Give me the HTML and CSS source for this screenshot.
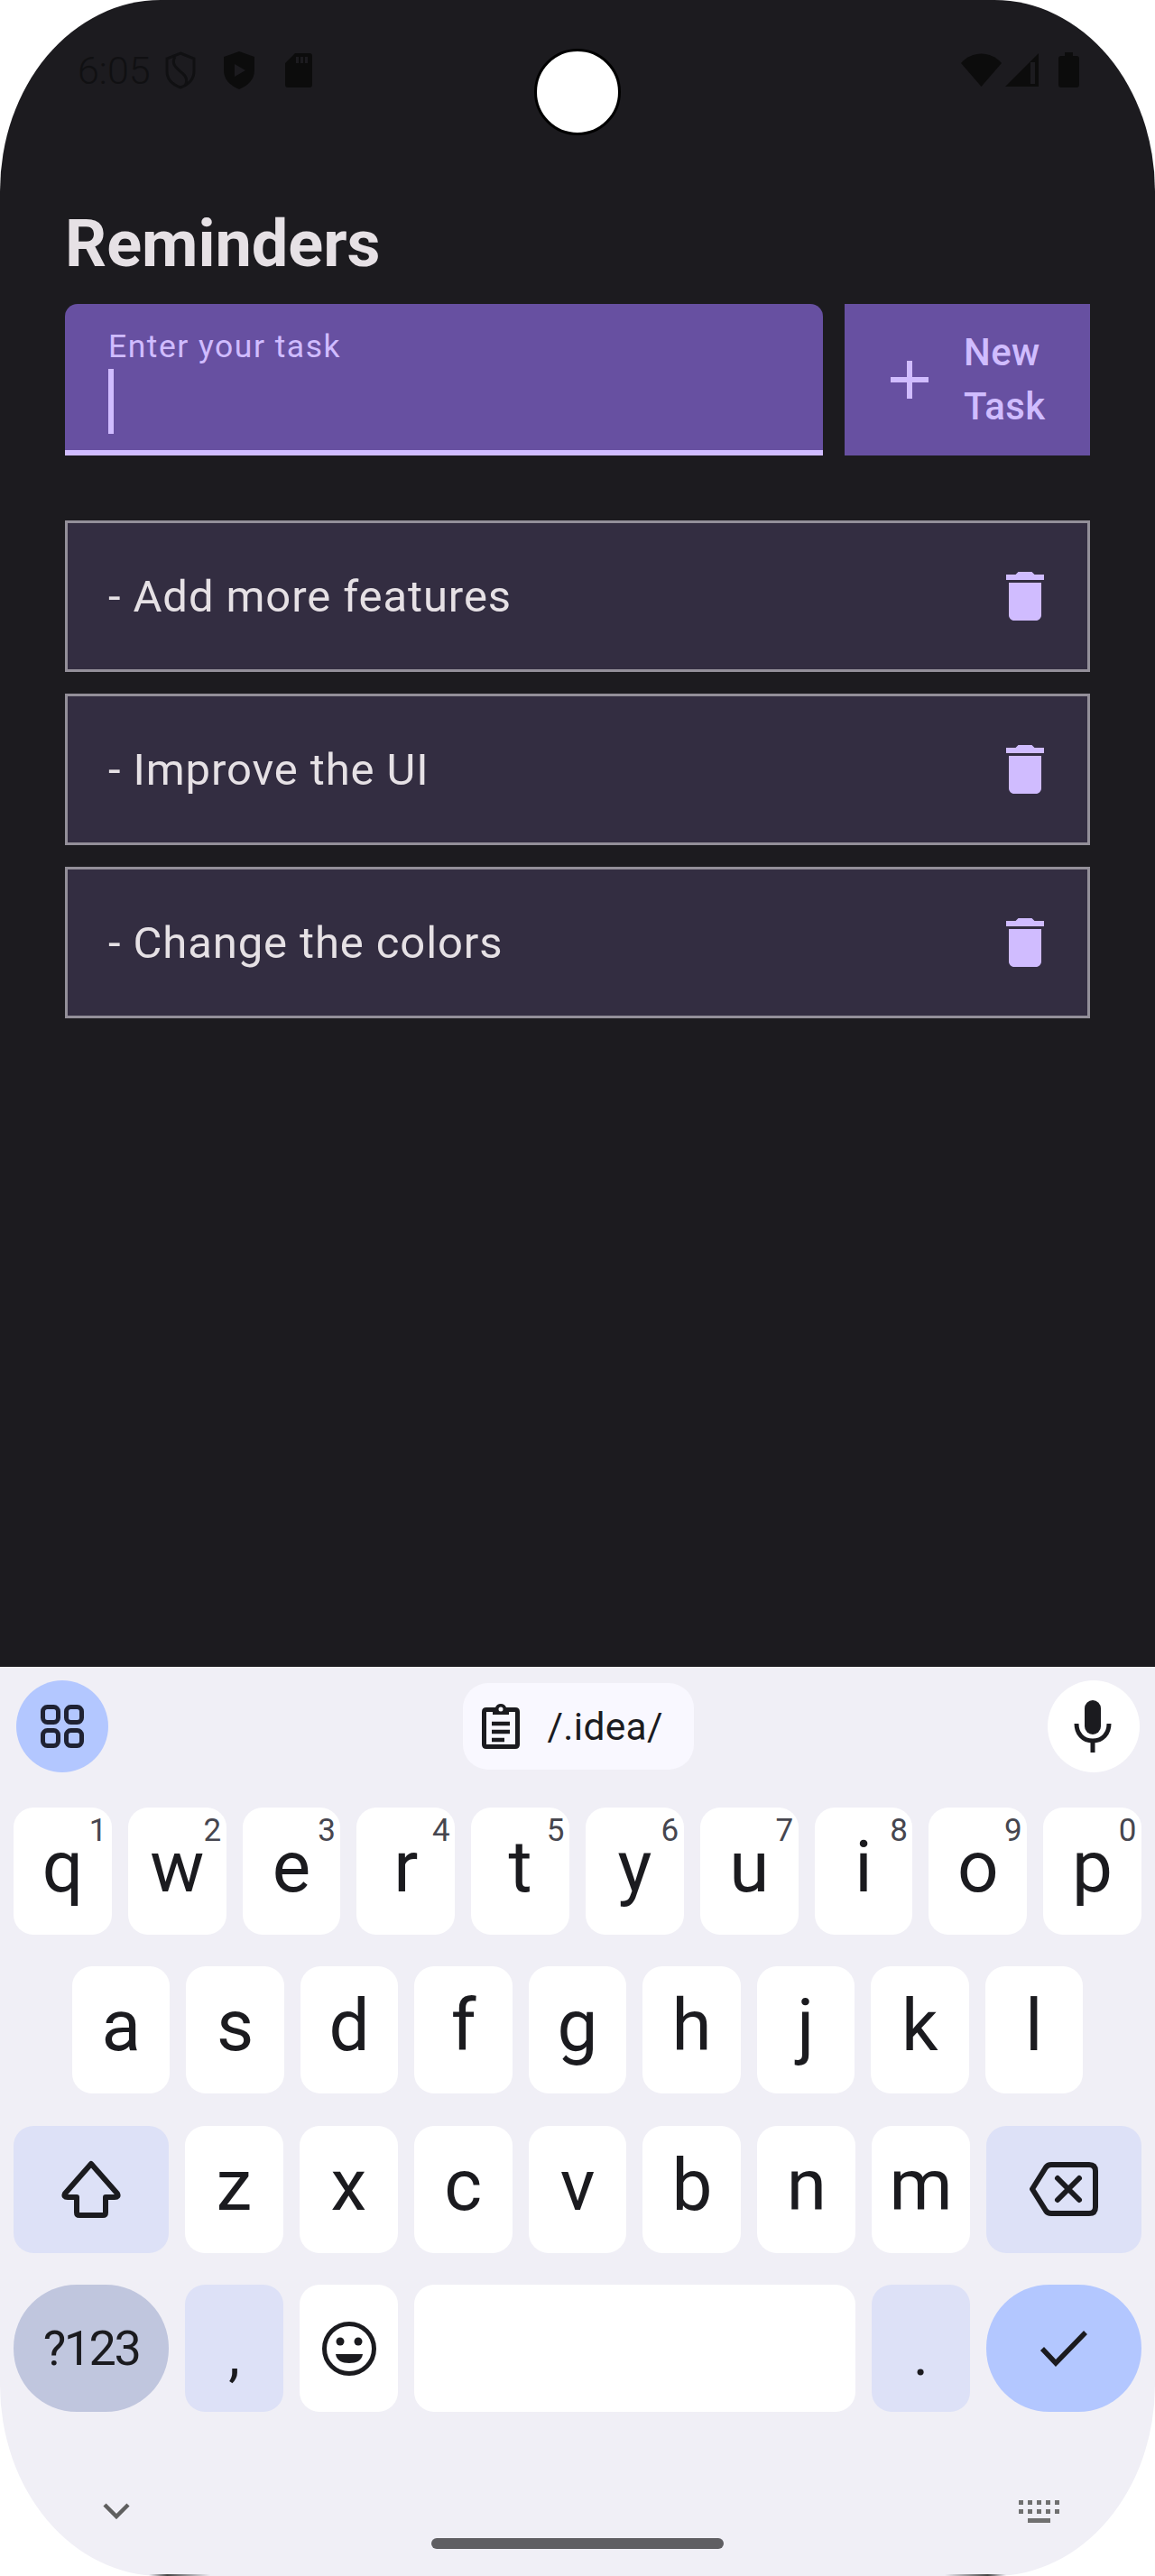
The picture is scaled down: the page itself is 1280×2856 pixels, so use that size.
FILE: index.html
```html
<!DOCTYPE html>
<html lang="en">
<head>
    <meta charset="UTF-8">
    <meta name="viewport" content="width=device-width, initial-scale=1.0">
    <title>Reminders</title>
    <link rel="stylesheet" href="styles.css">
</head>
<body>
    <div class="phone">
        <div class="camera"></div>

        <main class="app">
            <div class="status">
                <div class="status-left">
                    <span class="time">6:05</span>
                    <svg class="ic-shield" viewBox="0 0 34 42"><path d="M17 2 L32 8 V22 C32 31 25 37 17 40 C9 37 2 31 2 22 V8 Z" fill="none" stroke="#101012" stroke-width="3"/><path d="M11 6 C6 14 13 19 19 24 C24 28 25 33 22 38" fill="none" stroke="#101012" stroke-width="3"/></svg>
                    <svg class="ic-shield2" viewBox="0 0 34 42"><path fill-rule="evenodd" d="M17 0 L34 6 V21 C34 31 27 38 17 42 C7 38 0 31 0 21 V6 Z M12 14 V28 L24 21 Z" fill="#0c0c0c"/></svg>
                    <svg class="ic-sd" viewBox="0 0 30 38"><path fill-rule="evenodd" d="M11 0 H27 Q30 0 30 3 V35 Q30 38 27 38 H3 Q0 38 0 35 V11 Z M12 4 V11 H15 V4 Z M17 4 V11 H20 V4 Z M22 4 V11 H25 V4 Z" fill="#0c0c0c"/></svg>
                </div>
                <div class="status-right">
                    <svg class="ic-wifi" viewBox="0 0 45 37"><path d="M0 11 C12 -3 33 -3 45 11 L22.5 37 Z" fill="#0c0c0c"/></svg>
                    <svg class="ic-signal" viewBox="0 0 37 37"><path fill-rule="evenodd" d="M37 0 V37 H0 Z M28 10 V34 H33 V10 Z" fill="#0c0c0c"/></svg>
                    <svg class="ic-battery" viewBox="0 0 23 39"><path d="M7 0 H16 V4 H20 Q23 4 23 7 V36 Q23 39 20 39 H3 Q0 39 0 36 V7 Q0 4 3 4 H7 Z" fill="#0c0c0c"/></svg>
                </div>
            </div>

            <h1 class="title">Reminders</h1>

            <div class="new-task">
                <div class="field">
                    <label class="field-label">Enter your task</label>
                    <span class="caret"></span>
                </div>
                <div class="add-btn">
                    <svg class="ic-plus" viewBox="0 0 42 42"><path d="M18 0 H24 V18 H42 V24 H24 V42 H18 V24 H0 V18 H18 Z" fill="#d0bcff"/></svg>
                    <span class="add-label">New Task</span>
                </div>
            </div>

            <div class="tasks">
                <div class="task">
                    <span>- Add more features</span>
                    <svg class="ic-trash" viewBox="0 0 24 24"><path d="M6 19c0 1.1.9 2 2 2h8c1.1 0 2-.9 2-2V7H6v12zM19 4h-3.5l-1-1h-5l-1 1H5v2h14V4z" fill="#d0bcff"/></svg>
                </div>
                <div class="task">
                    <span>- Improve the UI</span>
                    <svg class="ic-trash" viewBox="0 0 24 24"><path d="M6 19c0 1.1.9 2 2 2h8c1.1 0 2-.9 2-2V7H6v12zM19 4h-3.5l-1-1h-5l-1 1H5v2h14V4z" fill="#d0bcff"/></svg>
                </div>
                <div class="task">
                    <span>- Change the colors</span>
                    <svg class="ic-trash" viewBox="0 0 24 24"><path d="M6 19c0 1.1.9 2 2 2h8c1.1 0 2-.9 2-2V7H6v12zM19 4h-3.5l-1-1h-5l-1 1H5v2h14V4z" fill="#d0bcff"/></svg>
                </div>
            </div>
        </main>

        <section class="keyboard">
            <div class="toolbar">
                <div class="round-btn blue">
                    <svg class="ic-grid" viewBox="0 0 48 48">
                        <rect x="2.5" y="2.5" width="17" height="17" rx="5" />
                        <rect x="28.5" y="2.5" width="17" height="17" rx="5" />
                        <rect x="2.5" y="28.5" width="17" height="17" rx="5" />
                        <rect x="28.5" y="28.5" width="17" height="17" rx="5" />
                    </svg>
                </div>
                <div class="clip-chip">
                    <svg class="ic-clip" viewBox="0 0 42 50">
                        <path d="M13 6.500 H5 Q2.500 6.500 2.500 9 V45 Q2.500 47.500 5 47.500 H37 Q39.500 47.500 39.500 45 V9 Q39.500 6.500 37 6.500 H29" fill="none" stroke="#1b1b1f" stroke-width="5"/>
                        <path fill-rule="evenodd" d="M12 4 H15 A6.500 6.500 0 0 1 27 4 H30 V12 H12 Z M21 3.500 A2.500 2.500 0 1 0 21 8.500 A2.500 2.500 0 1 0 21 3.500 Z" fill="#1b1b1f"/>
                        <path d="M11 22 H31 M11 31 H31 M11 40 H25" stroke="#1b1b1f" stroke-width="4.500"/>
                    </svg>
                    <span class="clip-text">/.idea/</span>
                </div>
                <div class="round-btn white">
                    <svg class="ic-mic" viewBox="0 0 42 58">
                        <rect x="12" y="0" width="18" height="38" rx="9" fill="#1b1b1f"/>
                        <path d="M3 26 C3 37 10 45 21 45 C32 45 39 37 39 26" fill="none" stroke="#1b1b1f" stroke-width="5"/>
                        <path d="M21 44 V58" stroke="#1b1b1f" stroke-width="5"/>
                    </svg>
                </div>
            </div>

            <div class="keys">
                <div class="row">
                    <div class="key">q<sup>1</sup></div>
                    <div class="key">w<sup>2</sup></div>
                    <div class="key">e<sup>3</sup></div>
                    <div class="key">r<sup>4</sup></div>
                    <div class="key">t<sup>5</sup></div>
                    <div class="key">y<sup>6</sup></div>
                    <div class="key">u<sup>7</sup></div>
                    <div class="key">i<sup>8</sup></div>
                    <div class="key">o<sup>9</sup></div>
                    <div class="key">p<sup>0</sup></div>
                </div>
                <div class="row row-home">
                    <div class="key">a</div>
                    <div class="key">s</div>
                    <div class="key">d</div>
                    <div class="key">f</div>
                    <div class="key">g</div>
                    <div class="key">h</div>
                    <div class="key">j</div>
                    <div class="key">k</div>
                    <div class="key">l</div>
                </div>
                <div class="row">
                    <div class="key wide tint">
                        <svg class="ic-shift" viewBox="0 0 68 64"><path d="M34 4 L63 37 Q65 41 60 41 H50 V58 Q50 61 47 61 H21 Q18 61 18 58 V41 H8 Q3 41 5 37 Z" fill="none" stroke="#1b1b1f" stroke-width="6" stroke-linejoin="round"/></svg>
                    </div>
                    <div class="key">z</div>
                    <div class="key">x</div>
                    <div class="key">c</div>
                    <div class="key">v</div>
                    <div class="key">b</div>
                    <div class="key">n</div>
                    <div class="key">m</div>
                    <div class="key wide tint">
                        <svg class="ic-back" viewBox="0 0 76 60"><path d="M3 30 L18 6 Q20 3 24 3 H66 Q73 3 73 10 V50 Q73 57 66 57 H24 Q20 57 18 54 Z" fill="none" stroke="#1b1b1f" stroke-width="6" stroke-linejoin="round"/><path d="M31 18 L55 42 M55 18 L31 42" stroke="#1b1b1f" stroke-width="6" stroke-linecap="round"/></svg>
                    </div>
                </div>
                <div class="row">
                    <div class="key wide pill grey">?123</div>
                    <div class="key tint punct">,</div>
                    <div class="key">
                        <svg class="ic-emoji" viewBox="0 0 60 60"><circle cx="30" cy="30" r="27.500" fill="none" stroke="#1b1b1f" stroke-width="5"/><circle cx="20" cy="22" r="4.500" fill="#1b1b1f"/><circle cx="40" cy="22" r="4.500" fill="#1b1b1f"/><path d="M15 36 H45 C44 43 38 46 30 46 C22 46 16 43 15 36 Z" fill="#1b1b1f"/></svg>
                    </div>
                    <div class="key space"></div>
                    <div class="key tint punct">.</div>
                    <div class="key wide pill blue">
                        <svg class="ic-check" viewBox="0 0 54 40"><path d="M3 20 L18 36 L51 2" fill="none" stroke="#1b1b1f" stroke-width="5.500"/></svg>
                    </div>
                </div>
            </div>

            <div class="kb-footer">
                <svg class="ic-chevron" viewBox="0 0 30 18"><path d="M2 2 L15 15 L28 2" fill="none" stroke="#5f5f5f" stroke-width="4.500"/></svg>
                <svg class="ic-keys" viewBox="0 0 45 25">
                    <path d="M0 0h5v5h-5zM10 0h5v5h-5zM20 0h5v5h-5zM30 0h5v5h-5zM40 0h5v5h-5zM0 10h5v5h-5zM10 10h5v5h-5zM20 10h5v5h-5zM30 10h5v5h-5zM40 10h5v5h-5zM10 20h25v5h-25z" fill="#707070"/>
                </svg>
            </div>
            <div class="home-bar"></div>
        </section>

        <span class="edge edge-l"></span>
        <span class="edge edge-r"></span>
    </div>
</body>
</html>
```

FILE: styles.css
```css
body {
    margin: 0;
    background-color: white;
    font-family: Roboto, "Liberation Sans", sans-serif;
}

.phone {
    position: relative;
    width: 1280px;
    height: 2856px;
    display: flex;
    flex-direction: column;
    overflow: hidden;
    border-radius: 178px / 212px;
}

.camera {
    position: absolute;
    left: 592px;
    top: 54px;
    width: 96px;
    height: 96px;
    box-sizing: border-box;
    background-color: white;
    border: 3px solid black;
    border-radius: 50%;
}

/* app */
.app {
    height: 1848px;
    box-sizing: border-box;
    padding: 0 72px;
    background-color: #1c1b1f;
}

.status {
    height: 229px;
    margin: 0 -72px;
    padding: 57px 84px 0 86px;
    box-sizing: border-box;
    display: flex;
    justify-content: space-between;
    align-items: flex-start;
}

.status-left,
.status-right {
    display: flex;
    align-items: flex-start;
}

.time {
    font-size: 43px;
    font-weight: 300;
    line-height: 42px;
    color: #101012;
    width: 97px;
}

.ic-shield { width: 34px; height: 42px; margin-right: 31px; }
.ic-shield2 { width: 34px; height: 42px; margin-right: 34px; }
.ic-sd { width: 30px; height: 38px; margin-top: 2px; }
.ic-wifi { width: 45px; height: 37px; margin-top: 2px; margin-right: 4px; }
.ic-signal { width: 37px; height: 37px; margin-top: 2px; margin-right: 22px; }
.ic-battery { width: 23px; height: 39px; margin-top: 1px; }

.title {
    margin: 0 0 24px;
    font-size: 72px;
    font-weight: 700;
    line-height: 84px;
    color: #e6e1e5;
}

.new-task {
    display: flex;
    gap: 24px;
    height: 168px;
}

.field {
    flex: 1;
    box-sizing: border-box;
    padding: 26px 48px 0;
    background-color: #6750a1;
    border-bottom: 6px solid #d0bcff;
    border-radius: 14px 14px 0 0;
}

.field-label {
    display: block;
    font-size: 35.500px;
    line-height: 42px;
    letter-spacing: 1.500px;
    color: #d0bcff;
}

.caret {
    display: block;
    width: 6px;
    height: 72px;
    margin-top: 4px;
    background-color: #d0bcff;
}

.add-btn {
    width: 272px;
    box-sizing: border-box;
    padding-left: 51px;
    display: flex;
    align-items: center;
    gap: 39px;
    background-color: #6750a1;
}

.ic-plus { width: 42px; height: 42px; flex: none; }

.add-label {
    width: min-content;
    font-size: 42px;
    font-weight: 500;
    line-height: 60px;
    letter-spacing: 0.4px;
    color: #d0bcff;
}

.tasks {
    margin-top: 72px;
    display: flex;
    flex-direction: column;
    gap: 24px;
}

.task {
    height: 168px;
    box-sizing: border-box;
    padding: 0 33px 0 45px;
    display: flex;
    align-items: center;
    justify-content: space-between;
    background-color: #332d41;
    border: 3px solid #938f99;
    font-size: 49px;
    letter-spacing: 0.900px;
    color: #e6e1e5;
}

.ic-trash { width: 72px; height: 72px; }

/* teclado */
.keyboard {
    position: relative;
    flex: 1;
    padding-top: 15px;
    background-color: #f0eff6;
    color: #1b1b1f;
}

.toolbar {
    height: 102px;
    padding: 0 17px 0 18px;
    display: flex;
    align-items: center;
    justify-content: space-between;
}

.round-btn {
    width: 102px;
    height: 102px;
    display: flex;
    align-items: center;
    justify-content: center;
    border-radius: 50%;
}

.round-btn.blue { background-color: #b3c7ff; }
.round-btn.white { background-color: white; }

.ic-grid { width: 48px; height: 48px; fill: none; stroke: #1f2233; stroke-width: 5; }
.ic-mic { width: 42px; height: 58px; margin-right: 2px; }

.clip-chip {
    width: 256px;
    height: 96px;
    box-sizing: border-box;
    padding-left: 21px;
    display: flex;
    align-items: center;
    gap: 31px;
    background-color: #f9f8ff;
    border-radius: 28px;
}

.ic-clip { width: 42px; height: 50px; flex: none; }

.clip-text {
    font-size: 42.500px;
    letter-spacing: 0.300px;
}

.keys {
    margin-top: 39px;
    padding: 0 15px;
    display: flex;
    flex-direction: column;
    gap: 35.450px;
}

.row {
    height: 141px;
    display: flex;
    gap: 18px;
}

.row-home { padding: 0 65px; }

.key {
    position: relative;
    flex: 1 1 0;
    display: flex;
    align-items: center;
    justify-content: center;
    box-sizing: border-box;
    padding-bottom: 9px;
    background-color: white;
    border-radius: 22px;
    font-size: 80px;
}

.key sup {
    position: absolute;
    top: 8px;
    right: 5.500px;
    font-size: 35px;
    line-height: 35px;
    color: #46464f;
}

.key.wide { flex: none; width: 172px; padding-bottom: 0; }
.key.space { flex: none; width: 489px; }
.key.tint { background-color: #dde1f7; }
.key.pill { border-radius: 70px; }
.key.grey { background-color: #c0c6de; font-size: 54px; letter-spacing: -2.500px; }
.key.blue { background-color: #b3c7ff; }
.key.punct { padding-bottom: 0; padding-top: 16px; font-size: 64px; }

.ic-shift { width: 68px; height: 64px; }
.ic-back { width: 76px; height: 60px; }
.ic-emoji { width: 60px; height: 60px; margin-top: 9px; }
.ic-check { width: 54px; height: 40px; }

.kb-footer {
    margin-top: 97.650px;
    padding: 0 106px 0 114px;
    display: flex;
    align-items: center;
    justify-content: space-between;
}

.ic-chevron { width: 30px; height: 18px; }
.ic-keys { width: 45px; height: 25px; }

.home-bar {
    width: 324px;
    height: 12px;
    margin: 17px auto 0;
    background-color: #5f5e62;
    border-radius: 6px;
}

.edge {
    position: absolute;
    bottom: 0;
    width: 68px;
    height: 2px;
}

.edge-l { left: 165px; background: linear-gradient(to right, #f0eff6, #444 30%, #f0eff6); }
.edge-r { right: 165px; background: linear-gradient(to left, #f0eff6, #444 30%, #f0eff6); }
```
